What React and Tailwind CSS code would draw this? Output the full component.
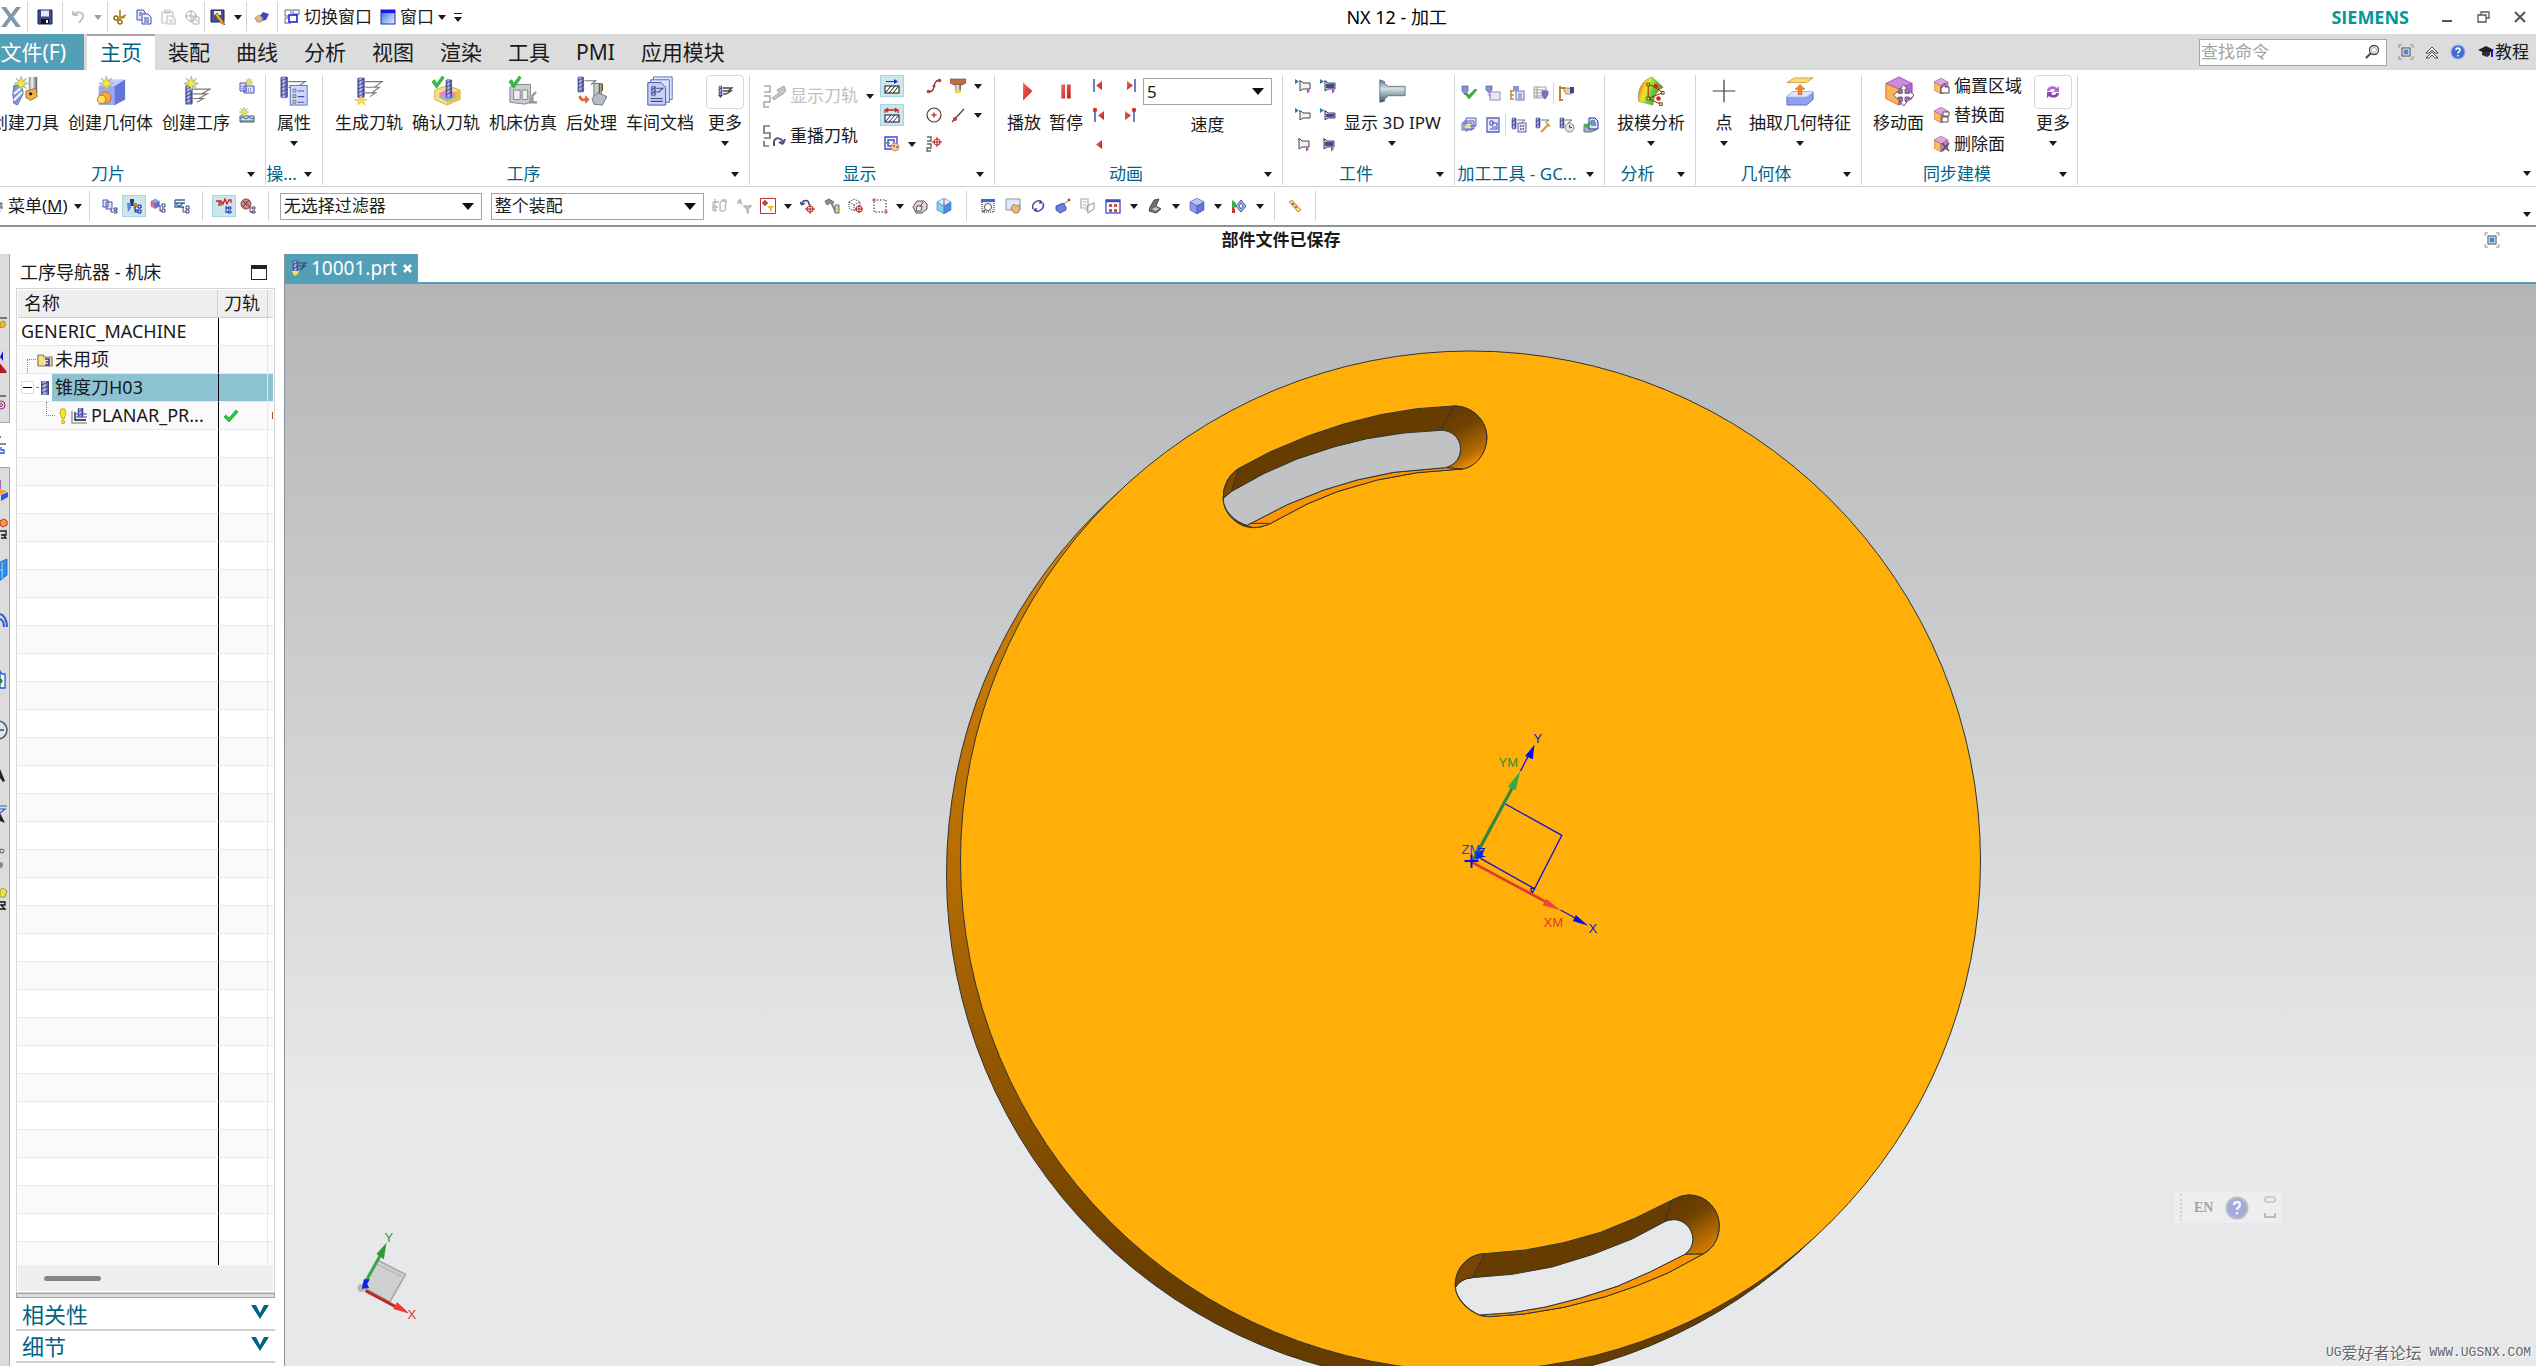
import { useState } from 'react';

/* ── Shared gradients, referenced by id from every icon ── */
function Gradients() {
  return (
    <svg className="absolute h-0 w-0" aria-hidden="true">
      <defs>
        <linearGradient id="steel" x1="0" x2="1" y1="0" y2="0">
          <stop offset="0" stopColor="#4a4f9c" />
          <stop offset=".4" stopColor="#c3c8f5" />
          <stop offset="1" stopColor="#3c3f86" />
        </linearGradient>
        <linearGradient id="grey" x1="0" x2="1" y1="0" y2="0">
          <stop offset="0" stopColor="#8b8b8b" />
          <stop offset=".4" stopColor="#f2f2f2" />
          <stop offset="1" stopColor="#5c5c5c" />
        </linearGradient>
        <linearGradient id="cyl" x1="0" x2="0" y1="0" y2="1">
          <stop offset="0" stopColor="#5d7785" />
          <stop offset=".4" stopColor="#d5e2e8" />
          <stop offset="1" stopColor="#3f5865" />
        </linearGradient>
        <linearGradient id="rainbow" x1="0" x2="1" y1="0" y2=".4">
          <stop offset="0" stopColor="#f0351f" />
          <stop offset=".4" stopColor="#f7e52a" />
          <stop offset=".7" stopColor="#4fd13c" />
          <stop offset="1" stopColor="#e8452a" />
        </linearGradient>
        <linearGradient id="red" x1="0" x2="1" y1="0" y2="1">
          <stop offset="0" stopColor="#f06a60" />
          <stop offset="1" stopColor="#c4181a" />
        </linearGradient>
        <linearGradient id="sky" x1="0" x2="1" y1="0" y2="1">
          <stop offset="0" stopColor="#2d6fd8" />
          <stop offset="1" stopColor="#e8f2ff" />
        </linearGradient>
      </defs>
    </svg>
  );
}

/* ── Icon building blocks ── */
function Spark({ x, y, s = 1 }) {
  return (
    <path
      transform={`translate(${x} ${y}) scale(${s})`}
      d="M0-7 1.5-2.5 5-5 2.5-1.5 7 0 2.5 1.5 5 5 1.5 2.5 0 7-1.5 2.5-5 5-2.5 1.5-7 0-2.5-1.5-5-5-1.5-2.5Z"
      fill="#ffe52e" stroke="#86a7b5" strokeWidth=".7"
    />
  );
}

function Mill({ x, y, w = 7, h = 22 }) {
  const n = Math.floor(h / 4);
  return (
    <g>
      <rect x={x} y={y} width={w} height={h} rx="1" fill="url(#steel)" stroke="#3d4186" strokeWidth=".6" />
      {Array.from({ length: n }, (_, i) => (
        <path key={i} d={`M${x} ${y + 4 + i * 4}l${w}-3`} stroke="#34387c" strokeWidth=".9" />
      ))}
    </g>
  );
}

function Cube({ x, y, s = 1, top = '#b9c1f5', left = '#8e9aee', right = '#6674d8', line = '#4450a8' }) {
  return (
    <g transform={`translate(${x} ${y}) scale(${s})`} stroke={line} strokeWidth=".6" strokeLinejoin="round">
      <path d="M0 4 7 0 14 4 7 8Z" fill={top} />
      <path d="M0 4 7 8V16L0 12Z" fill={left} />
      <path d="M14 4 7 8V16L14 12Z" fill={right} />
    </g>
  );
}

const check = 'M1 6 4 4 6 8 12 0 14 2 6 13Z';

/* Large ribbon icons, drawn on a 32 unit grid */
const BIG = {
  tool: (
    <>
      <rect x="20" y="1" width="9" height="17" fill="url(#grey)" />
      <path d="M17 16 28 13 29 22 22 26 17 23Z" fill="#f2b04c" stroke="#8a5a1a" strokeWidth=".8" />
      <circle cx="22" cy="19" r="1.8" fill="#222" />
      <path d="M4 10H13L14 19 8 31 4 29 3 20Z" fill="#7c97d8" stroke="#4a5aa0" strokeWidth=".8" />
      <path d="M4 19 13 12M4 26 13 17" stroke="#eef2ff" strokeWidth="2.4" />
      <Spark x={12} y={8} s={1.1} />
    </>
  ),
  geometry: (
    <>
      <path d="M3 11 13 4H31V25L20 31H3Z" fill="#7f8ff0" />
      <path d="M3 11H20V31H3Z" fill="#9aa7f5" />
      <path d="M3 11 13 4H31L20 11Z" fill="#c2cbfb" />
      <path d="M20 11V31L31 25V4Z" fill="#6575dc" />
      <circle cx="10" cy="23" r="6" fill="#f7a64a" stroke="#c2701c" />
      <circle cx="6" cy="25" r="4.5" fill="#fbe45c" stroke="#c2701c" />
      <Spark x={11} y={8} s={1.1} />
    </>
  ),
  operation: (
    <>
      <path d="M13 14H31L22 19H13M22 19H28L19 24H13M19 24H24L17 28" fill="none" stroke="#7a7a7a" strokeWidth="1.2" />
      <Mill x={5} y={10} h={20} />
      <Spark x={11} y={8} s={1.1} />
    </>
  ),
  props: (
    <>
      <path d="M10 6H28L22 10M10 12H26" fill="none" stroke="#7a7a7a" strokeWidth="1.2" />
      <Mill x={2} y={1} />
      <rect x="12" y="10" width="18" height="21" fill="#cfd8fa" stroke="#5a66b8" />
      <path d="M15 14h3v3h-3zM15 20h3v3h-3zM15 26h3v3h-3z" fill="#f6f05a" stroke="#4450a8" strokeWidth=".8" />
      <path d="M20 16H27M20 22H27M20 28H27" stroke="#4450a8" strokeWidth="1.2" />
    </>
  ),
  generate: (
    <>
      <path d="M12 6H30L22 12H12M22 12H27L19 18H12M19 18H23L17 22" fill="none" stroke="#7a7a7a" strokeWidth="1.2" />
      <Mill x={4} y={2} h={21} />
      <path d="M8 20 9 25 14 25 10 27 12 31 8 28 4 31 5 27 1 25 6 25Z" fill="#ffe04a" stroke="#d8a31c" strokeWidth=".5" />
    </>
  ),
  verify: (
    <>
      <path d="M4 15 17 10 31 15V25L17 31 4 25Z" fill="#fbe07a" stroke="#c79a2c" strokeWidth=".8" />
      <path d="M17 20V31L31 25V15Z" fill="#f0c244" />
      <path d="M9 18 17 14 26 18V23L17 27 9 23Z" fill="#e68ad0" />
      <path d="M9 21 17 25 26 21V23L17 27 9 23Z" fill="#57cfe0" />
      <Mill x={16} y={4} w={6} h={19} />
      <path d={check} fill="#2fc43a" stroke="#138a1e" strokeWidth=".6" />
    </>
  ),
  machine: (
    <>
      <path d="M2 12 8 9H24V28L18 30 2 28Z" fill="#c9cdd2" stroke="#80858c" />
      <path d="M6 15H13V25H6ZM15 15H21V25H15Z" fill="#eceef0" stroke="#80858c" />
      <path d="M22 28H31M26 27V21L30 17" fill="none" stroke="#8f949a" strokeWidth="2.4" />
      <path d="M26 21 22 24" stroke="#a9adb2" strokeWidth="2" />
      <path d={check} fill="#2fc43a" stroke="#138a1e" strokeWidth=".6" />
    </>
  ),
  post: (
    <>
      <path d="M8 5H20L15 9" fill="none" stroke="#7a7a7a" strokeWidth="1.2" />
      <Mill x={1} y={1} w={6} h={16} />
      <path d="M18 8H26V24H18Z" fill="#c5cacf" stroke="#6d7278" />
      <path d="M24 8V18M27 8V16" stroke="#7d5a30" strokeWidth="1.6" />
      <path d="M16 24 22 18 32 22 27 31 18 30Z" fill="#b8bdc3" stroke="#6d7278" />
      <path d="M2 22C3 27 6 27 9 26V29L13 25 9 21V24C6 25 5 24 4 21Z" fill="#f0662a" stroke="#b83e10" strokeWidth=".5" />
    </>
  ),
  docs: (
    <>
      <path d="M9 1H29V25H9Z" fill="#e4e9fd" stroke="#5a66b8" />
      <path d="M6 4H26V28H6Z" fill="#dbe2fc" stroke="#5a66b8" />
      <path d="M3 7H17L22 12V31H3Z" fill="#c6d0f9" stroke="#4450a8" />
      <Mill x={7} y={11} w={4} h={10} />
      <path d="M12 13H19L15 17H12M6 24H19M6 27H19" fill="none" stroke="#4a4f70" strokeWidth="1.2" />
    </>
  ),
  play: <path d="M15 7 25 16 15 26Z" fill="url(#red)" />,
  pause: <path d="M11 9H15V24H11ZM17 9H21V24H17Z" fill="url(#red)" />,
  ipw: (
    <path d="M3 4 8 6V8L12 11H30V21H12L8 25V27L3 28Z" fill="url(#cyl)" stroke="#51636c" strokeWidth=".8" />
  ),
  draft: (
    <>
      <path d="M3 27C1 15 6 5 17 1L29 12C22 16 19 22 18 31Z" fill="url(#rainbow)" stroke="#5a8a3c" strokeWidth=".6" />
      <path d="M13 9 21 12 28 18M13 9V24L28 18M13 24 26 30" fill="none" stroke="#a81818" />
      <circle cx="21" cy="11" r="2.4" fill="#d81e1e" /><circle cx="24" cy="24" r="2.4" fill="#d81e1e" />
      <path d="M11.500 7.500h3v3h-3zM11.500 22.500h3v3h-3zM27 16.500h3v3h-3zM25 28.500h3v3h-3z" fill="#fbf35a" stroke="#222" strokeWidth=".8" />
    </>
  ),
  point: <path d="M16 4V28M4 16H28" stroke="#3c3c3c" strokeWidth="1.300" />,
  extract: (
    <>
      <path d="M2 7 10 2H30L23 7Z" fill="#fbdf6a" stroke="#c08a2a" strokeWidth=".8" />
      <path d="M2 22 8 17H30V25L23 31H2Z" fill="#8ea0ee" stroke="#4a5ab8" strokeWidth=".8" />
      <path d="M2 22 8 17H30L23 22Z" fill="#dfe6ff" />
      <path d="M14 20V14H11L16 9 21 14H18V20Z" fill="#f58a2a" stroke="#b8500e" strokeWidth=".6" />
    </>
  ),
  moveFace: (
    <>
      <path d="M2 8 16 1 30 8 16 14Z" fill="#c98be0" stroke="#8a3aa8" strokeWidth=".8" />
      <path d="M2 8 16 14V31L2 24Z" fill="#f8b45a" stroke="#d86a2a" strokeWidth="1" />
      <path d="M30 8 16 14V31L30 24Z" fill="#b26ad0" stroke="#8a3aa8" strokeWidth=".8" />
      <path d="M21 9 25 14H22.500V18.500H27V16L32 20.500 27 25V22.500H22.500V27H25L21 32 17 27H19.500V22.500H15V25L10 20.500 15 16V18.500H19.500V14H17Z" fill="#fff" stroke="#555" />
    </>
  ),
};

/* Small icons on a 16 unit grid */
const SMALL = {
  save: (
    <>
      <path d="M1 1H15V15H1Z" fill="#3a4a8c" stroke="#1c2550" />
      <rect x="4" y="1.500" width="8" height="6" fill="#dfe8fb" />
      <rect x="4" y="10" width="8" height="5" fill="#111" /><rect x="9" y="11" width="2" height="3" fill="#fff" />
    </>
  ),
  undo: <path d="M3 6C8 1 14 4 13 8C12 11 10 12 9 14M3 6V2M3 6H8" fill="none" stroke="#c4c4c4" strokeWidth="2" />,
  cut: (
    <>
      <path d="M8 1V9L14 6M8 9 13 8" stroke="#b88a1e" strokeWidth="1.800" fill="none" />
      <circle cx="4" cy="9" r="2" fill="none" stroke="#8f6c14" strokeWidth="1.500" />
      <circle cx="8" cy="13" r="2" fill="none" stroke="#8f6c14" strokeWidth="1.500" />
    </>
  ),
  copy: (
    <>
      <path d="M1 1H7L9 3V11H1Z" fill="#dfe5fb" stroke="#4450a8" />
      <path d="M6 5H12L15 8V15H6Z" fill="#eef1fe" stroke="#4450a8" />
      <path d="M8 9H13M8 11H13M8 13H13M3 4H6M3 6H5" stroke="#4450a8" />
    </>
  ),
  paste: <path d="M2 3H13V8M2 3V14H6M5 1H10V4H5ZM7 7H12L15 10V15H7ZM9 11H13M9 13H13" fill="none" stroke="#c2c2c2" strokeWidth="1.200" />,
  target: <path d="M7 1V14M1 7H13M2 7A5 5 0 0 1 12 7A5 5 0 0 1 7 12A5 5 0 0 1 2 7M9 8H15V15H9ZM11 10 14 13" fill="none" stroke="#b0b0b0" />,
  savePen: (
    <>
      <path d="M1 1H14V13H1Z" fill="#46558f" stroke="#1c2550" />
      <rect x="4" y="2" width="7" height="4" fill="#e6edfb" />
      <path d="M7 4 13 12 15 16 11 14 5 6Z" fill="#f5b52a" stroke="#a8401c" strokeWidth=".8" />
    </>
  ),
  eraser: <><path d="M5 8 9 3 15 5 12 11 7 12Z" fill="#3a4ac0" /><path d="M1 9 5 6 9 9 7 13 3 13Z" fill="#e6b98a" stroke="#8f6a4a" strokeWidth=".6" /></>,
  switchWin: (
    <>
      <path d="M1 1H7V5M1 1V7H4M9 1H15V5H9ZM1 9H4M1 9V14H7" fill="none" stroke="#8a95a5" strokeWidth="1.300" />
      <rect x="5" y="6" width="8" height="7" fill="#fff" stroke="#1414d8" strokeWidth="1.500" />
    </>
  ),
  window: <><rect x="1" y="1" width="14" height="14" fill="url(#sky)" stroke="#1c2ea8" /><path d="M1 2.500H15" stroke="#1414f0" strokeWidth="3" /></>,
  full: (
    <>
      <path d="M1 4V1H4M12 1H15V4M15 12V15H12M4 15H1V12" fill="none" stroke="#8a8a8a" />
      <rect x="4" y="4" width="8" height="8" fill="#fff" stroke="#444" /><rect x="5.500" y="5.500" width="5" height="5" fill="#4a86d8" />
    </>
  ),
  up: <path d="M2 9 8 3 14 9H11L8 6 5 9ZM2 14 8 8 14 14H11L8 11 5 14Z" fill="#fff" stroke="#333" strokeWidth=".9" />,
  help: (
    <>
      <circle cx="8" cy="8" r="7" fill="#3f6fd0" stroke="#9ab4e6" />
      <path d="M6 6C6 3.500 10 3.500 10 6C10 7.500 8 7.500 8 9.500M8 11V12.500" fill="none" stroke="#fff" strokeWidth="1.600" />
    </>
  ),
  hat: <><path d="M0 6 8 2 16 6 9 10Z" fill="#222" /><path d="M4 8V11L9 13 12 11V8" fill="#333" /><path d="M14 6V13" stroke="#1414f0" strokeWidth="2" /></>,
  search: <><circle cx="10" cy="6" r="4.500" fill="none" stroke="#444" strokeWidth="1.300" /><circle cx="10" cy="6" r="2.500" fill="none" stroke="#999" strokeWidth=".8" /><path d="M7 9 2 14" stroke="#444" strokeWidth="2" /></>,
  newProg: <><path d="M1 5H7V13H1ZM5 8H15V15H5Z" fill="#dde2fb" stroke="#4a55a8" /><path d="M3 8V11M7 11H13M7 13H13" stroke="#4a55a8" strokeDasharray="1 1" /><Spark x={10} y={4} s={.6} /></>,
  newMethod: <><path d="M1 9H15V15H1Z" fill="#cfe0ea" stroke="#3f6580" /><path d="M1 12 4 10 7 12 10 10 13 12 15 11M1 14H15" fill="none" stroke="#3f6580" /><Spark x={5} y={5} s={.7} /></>,
  moreOp: <><path d="M6 4H15L11 7H6M10 7H14L9 10H6" fill="none" stroke="#444" strokeWidth="1.300" /><Mill x={2} y={2} w={3} h={9} /><path d="M1 11H6L3.500 14Z" fill="#3a3f8c" /></>,
  hatch1: <><path d="M2 3H10V1L14 3.500 10 6V4H2Z" fill="#1a2ee0" /><rect x="1" y="8" width="14" height="7" fill="#fff" stroke="#111" /><path d="M2 14 7 8M5 15 11 8M9 15 14 9" stroke="#111" /></>,
  hatch2: <><path d="M1 6V3H14V6M4 1 2 3 4 5M11 1 13 3 11 5" fill="none" stroke="#d81e1e" strokeWidth="1.300" /><rect x="1" y="8" width="14" height="7" fill="#fff" stroke="#111" /><path d="M2 14 7 8M5 15 11 8M9 15 14 9" stroke="#1c2478" /></>,
  palette: <><path d="M1 1H13V13H1ZM4 4H10V10H4Z" fill="#fff" stroke="#4444d0" strokeWidth="1.400" /><path d="M1 7H6" stroke="#2fb43a" strokeWidth="1.500" /><circle cx="11" cy="11" r="4" fill="#f3cfa0" stroke="#9a6a3a" strokeWidth=".6" /><circle cx="10" cy="10" r="1" fill="#d82e2e" /><circle cx="13" cy="11" r="1" fill="#3a6ae0" /></>,
  curve: <><path d="M2 14C12 14 4 3 14 2" fill="none" stroke="#444" strokeWidth="1.300" /><circle cx="2.500" cy="13.500" r="1.800" fill="#d83030" /><circle cx="8" cy="8" r="1.600" fill="#d83030" /><circle cx="13.500" cy="2.500" r="1.800" fill="#d83030" /></>,
  circle: <><circle cx="8" cy="8" r="7" fill="none" stroke="#444" strokeWidth="1.200" /><path d="M8 5.500V10.500M5.500 8H10.500" stroke="#d83030" strokeWidth="1.500" /></>,
  stepTarget: <><path d="M1 1H5V5H1M1 8H5V12H1V15H5" fill="none" stroke="#666" strokeWidth="1.400" /><circle cx="11" cy="6" r="3" fill="none" stroke="#d83030" strokeWidth="1.200" /><path d="M11 1V11M6 6H16" stroke="#a82020" /></>,
  holder: <><path d="M0 1H16V5L12 7H4L0 5Z" fill="#b8704a" stroke="#7a4020" strokeWidth=".6" /><rect x="5" y="7" width="6" height="6" fill="url(#grey)" /><rect x="5" y="12" width="6" height="3" fill="#f0d43a" /></>,
  line: <><path d="M2 15 14 2" stroke="#444" strokeWidth="1.200" /><circle cx="5" cy="12" r="2" fill="#d83030" /></>,
  toStart: <><path d="M3 1V14" stroke="#4450a8" strokeWidth="1.500" /><path d="M11 3 5 7.500 11 12Z" fill="url(#red)" /></>,
  toEnd: <><path d="M13 1V14" stroke="#4450a8" strokeWidth="1.500" /><path d="M5 3 11 7.500 5 12Z" fill="url(#red)" /></>,
  prev: <><path d="M4 1V15" stroke="#4450a8" strokeWidth="1.500" /><circle cx="4" cy="3" r="2.200" fill="#d83030" /><path d="M13 4 7 8.500 13 13Z" fill="url(#red)" /></>,
  next: <><path d="M12 1V15" stroke="#4450a8" strokeWidth="1.500" /><circle cx="12" cy="3" r="2.200" fill="#d83030" /><path d="M3 4 9 8.500 3 13Z" fill="url(#red)" /></>,
  back: <path d="M11 4 5 8.500 11 13Z" fill="url(#red)" />,
  ipwA: <><path d="M0 1 4 3.500 0 6Z" fill="#2a7fb0" /><path d="M4 3H6L8 5H15V11H8L5 13V3" fill="#f2f2f2" stroke="#444" /><path d="M12 11 15 13 12 15.500Z" fill="#c03ac0" /></>,
  ipwB: <><path d="M0 1 4 3.500 0 6Z" fill="#2a7fb0" /><path d="M4 3H6L8 5H15V11H8L5 13V3" fill="#c5c9ee" stroke="#444" /><path d="M6 6H14V10H6Z" fill="#4048a0" /><path d="M12 11 15 13 12 15.500Z" fill="#c03ac0" /></>,
  ipwC: <><path d="M0 1 4 3.500 0 6Z" fill="#2a7fb0" /><path d="M4 4H6L8 6H15V11H8L5 13V4" fill="#f2f2f2" stroke="#444" /></>,
  ipwD: <><path d="M0 1 4 3.500 0 6Z" fill="#2a7fb0" /><path d="M4 4H6L8 6H15V11H8L5 13V4" fill="#c5c9ee" stroke="#444" /><path d="M6 7H14V10H6Z" fill="#4048a0" /></>,
  ipwE: <><path d="M3 3H5L7 5H14V11H7L4 13V3" fill="#f2f2f2" stroke="#444" /><path d="M11 11 14 13 11 15.500Z" fill="#c03ac0" /></>,
  ipwF: <><path d="M3 3H5L7 5H14V11H7L4 13V3" fill="#c5c9ee" stroke="#444" /><path d="M5 6H13V10H5Z" fill="#4048a0" /><path d="M11 11 14 13 11 15.500Z" fill="#c03ac0" /></>,
  gcCheck: <><path d="M1 1H7V6L4 10 1 6Z" fill="#8a94c8" stroke="#555e98" strokeWidth=".7" /><path d="M4 9 8 14 16 5 14 4 8 10 6 8Z" fill="#35b53f" stroke="#1c8a28" strokeWidth=".5" /></>,
  gcDoc: <><rect x="5" y="7" width="10" height="8" fill="#e6e8f2" stroke="#8a90b8" /><path d="M1 1H7V5L4 8 1 5Z" fill="#8a94c8" stroke="#555e98" strokeWidth=".7" /><path d="M2 9H6V13Z" fill="#c88ad8" /></>,
  gcTree: <><rect x="7" y="6" width="8" height="9" fill="#dfe4fa" stroke="#6a74b8" /><path d="M9 9H13M9 11H13M9 13H13" stroke="#6a74b8" /><path d="M4 1H10V5L7 7 4 5Z" fill="#8a94c8" /><path d="M2 5V14M1 6H5M1 10H5M1 14H5" stroke="#b8902c" strokeWidth="1.500" /></>,
  gcTable: <><path d="M1 2H13V13H1ZM1 5H13M1 8H13M1 11H13M4 2V13" fill="#f6f6ee" stroke="#8a8f9a" strokeWidth=".8" /><path d="M9 6H15V10L12 14 9 10Z" fill="#8a6ac8" stroke="#555e98" strokeWidth=".7" /></>,
  gcHand: <><path d="M2 1V15M1 15H5M2 3H7" stroke="#b8862a" strokeWidth="2" /><path d="M6 3H11L14 5V9H8L6 6Z" fill="#f0cda6" stroke="#8a6238" strokeWidth=".7" /><rect x="12" y="2" width="4" height="6" fill="#35439a" /></>,
  gcCards: <><path d="M5 1H15V9H5ZM3 4H13V12H3ZM1 6H11V13H1Z" fill="#dfe4fa" stroke="#5a64b0" /><circle cx="7" cy="9" r="2" fill="#f6ec5a" /><path d="M5 15 7 12" stroke="#5a64b0" /></>,
  gcPage: <><path d="M2 1H14V15H2Z" fill="#e3e8fd" stroke="#5a64b0" strokeWidth="1.300" /><path d="M5 4H8V8H5ZM7 6H12V12H5M7 10H11" fill="none" stroke="#4450a8" /></>,
  gcSheet: <><Mill x={1} y={1} w={4} h={11} /><path d="M6 3H14L10 6" fill="none" stroke="#777" /><rect x="7" y="6" width="8" height="9" fill="#dfe4fa" stroke="#5a64b0" /><path d="M9 9H13M9 12H13" stroke="#4450a8" strokeDasharray="1.500 1" strokeWidth="1.500" /></>,
  gcWrench: <><Mill x={1} y={1} w={4} h={10} /><path d="M6 3H14L10 6" fill="none" stroke="#777" /><path d="M6 15 13 8 15 9M13 8 12 6" fill="none" stroke="#dca02a" strokeWidth="2.200" /></>,
  gcClock: <><Mill x={1} y={1} w={4} h={10} /><path d="M6 3H13L9 6" fill="none" stroke="#777" /><circle cx="10.500" cy="10.500" r="4.500" fill="#d8e4ee" stroke="#7a8a98" /><path d="M10.500 8V10.500H13" fill="none" stroke="#44525e" /></>,
  gcPost: <><path d="M1 9 6 6H13V13L8 15H1Z" fill="#aab0b6" stroke="#6d7278" /><path d="M6 1H12L15 4V12H6Z" fill="#dfe8fb" stroke="#1c2ea8" /><path d="M8 4H12M8 6H13M8 8H13" stroke="#1c2ea8" /><path d="M1 7 4 10 9 4" fill="none" stroke="#35b53f" strokeWidth="2" /></>,
  offset: <><Cube x={0} y={0} top="#dca6ec" left="#f8c05a" right="#c77ada" line="#b0586a" /><path d="M7 15V9H9V6H11V9H15V15Z" fill="#fff" stroke="#444" /></>,
  replace: <><Cube x={0} y={0} top="#dca6ec" left="#f8c05a" right="#c77ada" line="#b0586a" /><path d="M9 5H15V9H9ZM8 10H14V15H8Z" fill="#fff" stroke="#555" /></>,
  remove: <><Cube x={0} y={0} top="#dca6ec" left="#f8c05a" right="#c77ada" line="#b0586a" /><path d="M8 7 15 15M15 7 8 15" stroke="#555" strokeWidth="1.600" /></>,
  cycle: <><path d="M2 7C2 2 9 1 12 4L14 2V8H8L10 6C8 4 5 5 5 7Z" fill="#b56ad8" /><path d="M14 9C14 14 7 15 4 12L2 14V8H8L6 10C8 12 11 11 11 9Z" fill="#8a45b0" /></>,
  treeProg: <><path d="M1 2H6V9H1ZM4 4H10V11H4Z" fill="#dfe4fa" stroke="#4a55a8" /><path d="M9 11V14H12M12 10H15V12H12ZM12 13H15V15H12" fill="none" stroke="#35408c" /></>,
  treeTool: <><rect x="4" y="1" width="4" height="7" fill="#2a3a78" /><path d="M7 5H11V9L8 11Z" fill="#b8803a" /><path d="M1 5H5L5 10 2 14Z" fill="#5a86d8" /><path d="M9 9V14H12M9 12H12M12 7H15V10H12ZM12 12H15V15H12Z" fill="none" stroke="#1414a0" /></>,
  treeGeom: <><Cube x={1} y={1} s={.6} top="#8aa0ee" left="#e86a6a" right="#5a6ad8" /><path d="M10 7V13H12M12 6H15V9H12ZM12 11H15V14H12Z" fill="none" stroke="#35408c" /></>,
  treeMethod: <><path d="M1 2H11M1 5H11M1 2V9H10M3 5V7L6 8 9 5" fill="none" stroke="#3a6a9c" strokeWidth="1.300" /><path d="M9 9V14H12M12 8H15V11H12ZM12 12H15V15H12Z" fill="none" stroke="#35408c" /></>,
  wave: <><path d="M0 3H3V8M3 3H5V8M5 3 7 6 9 1 11 6 13 2H15V5" fill="none" stroke="#c81e1e" strokeWidth="1.300" /><path d="M10 8V15M10 10H13M10 14H13M12 9H15V11H12ZM12 13H15V15H12Z" fill="none" stroke="#1c2ea8" /></>,
  redGear: <><circle cx="6" cy="6" r="5" fill="#c88a8a" stroke="#a83a3a" /><path d="M3 3 10 9M9 2 3 9" stroke="#7a2a2a" /><path d="M10 8V14H13M12 9H15V11H12ZM12 13H15V15H12Z" fill="none" stroke="#4a3a5c" /></>,
  gear: <><circle cx="8" cy="8" r="5" fill="none" stroke="#7f8790" strokeWidth="4" strokeDasharray="2.600 1.300" /><circle cx="8" cy="8" r="4" fill="none" stroke="#7f8790" strokeWidth="1.500" /></>,
  ghostTree: <path d="M3 1V14M1 4H7M1 9H6M1 4V12H5M8 6A3 3 0 1 1 13 8A3 3 0 1 1 8 12ZM10 2H14V5" fill="none" stroke="#b8b8b8" strokeWidth="1.300" />,
  ghostFilter: <path d="M2 2 6 6M1 5 5 4 4 1M8 8H15L12 11V15L11 14V11Z" fill="#c8c8c8" stroke="#b8b8b8" strokeWidth="1.500" />,
  filter: <><path d="M.5.5H15.500V15.500H.5Z" fill="#fff" stroke="#c83030" /><path d="M5 2V8M2 5H8" stroke="#333" /><circle cx="5" cy="5" r="2" fill="none" stroke="#c83030" /><path d="M7 8H14L11.500 11V14L10 13V11Z" fill="#f0b42a" /></>,
  snapBack: <><path d="M2 7C2 1 9 1 9 7M2 7 0 4M2 7 5 5" fill="none" stroke="#3a4a78" strokeWidth="1.500" /><circle cx="10" cy="11" r="3" fill="none" stroke="#c83030" strokeWidth="1.200" /><path d="M10 6V16M5 11H15" stroke="#a82020" /></>,
  hammer: <><path d="M1 3 5 1 10 4 8 7 6 5 3 7Z" fill="#8a8f94" stroke="#4a4f54" strokeWidth=".7" /><path d="M8 6 12 15" stroke="#888" strokeWidth="2" /><path d="M11 7H15V15H11Z" fill="#f0d45a" stroke="#5a64b0" /></>,
  dotCube: <><path d="M1 4 6 1 12 4V10L6 13 1 10ZM1 4 6 7 12 4M6 7V13" fill="none" stroke="#333" strokeDasharray="1 1" /><circle cx="11" cy="11" r="3" fill="#fff" stroke="#c83030" strokeWidth="1.200" /><path d="M11 7V15M7 11H15" stroke="#a82020" /></>,
  marquee: <><rect x="2" y="2" width="12" height="12" fill="none" stroke="#222" strokeDasharray="1.500 1.500" /><path d="M.5.5h3v3h-3zM12.500 12.500h3v3h-3z" fill="#d86a6a" /></>,
  faceBox: <><path d="M1 9 5 3H12L15 6V11L10 15H4Z" fill="#d5d8dc" stroke="#555" /><path d="M5 8H10L9 13H4Z" fill="#f2f2f2" stroke="#555" /><path d="M11 4 8 9" stroke="#c83030" /></>,
  glassCube: <><Cube x={1} y={0} top="#e0f0fc" left="#8ccaf0" right="#4f8ae0" line="#3f78c0" /><path d="M8 8V1" stroke="#c03a5a" /></>,
  fit: <><rect x="2" y="3" width="12" height="11" fill="#e8eefc" stroke="#222" strokeDasharray="1 1" /><path d="M1 1H15V4H1Z" fill="#3a6ad8" /><circle cx="8" cy="9" r="3.500" fill="#fff" stroke="#555" /><path d="M5 12 3 14" stroke="#555" strokeWidth="1.500" /></>,
  pan: <><path d="M1 1H15V12H1Z" fill="#dfe9fb" stroke="#8a95a5" /><path d="M7 8 9 6 11 8 14 7 15 11 13 15H9L6 11Z" fill="#e8b878" stroke="#8f6a3a" strokeWidth=".7" /></>,
  rotate: <><path d="M3 11A6 6 0 0 1 12 4M13 5A6 6 0 0 1 4 12" fill="none" stroke="#3a4aa0" strokeWidth="1.500" /><path d="M10 2 13 5 9 6ZM6 14 3 11 7 10Z" fill="#3a4aa0" /></>,
  section: <><path d="M1 8 8 5 11 9V12L5 15 1 12Z" fill="#6a80e0" stroke="#35439a" strokeWidth=".8" /><path d="M9 6 14 2" stroke="#777" /><circle cx="14" cy="2" r="1.400" fill="#d83030" /></>,
  ghostPages: <path d="M1 1H8V10H1ZM3 4H6M3 7H6M5 12H9M7 8 14 5V11L8 15Z" fill="none" stroke="#a8a8a8" strokeWidth="1.200" />,
  orient: <><rect x="1" y="2" width="14" height="13" fill="#fff" stroke="#3a4ad0" strokeWidth="1.300" /><path d="M1 3H15" stroke="#3a4ad0" strokeWidth="2.500" /><path d="M4 6h3v3h-3zM9 6h3v3h-3zM4 11h3v3h-3zM9 11h3v3h-3z" fill="#d84a3a" /></>,
  shade: <><path d="M3 9 7 2 12 1 9 8 14 11 9 15 2 13Z" fill="#6a6f74" stroke="#33373a" strokeWidth=".8" /><path d="M5 11 9 9 12 11 8 13Z" fill="#c8ccd0" /></>,
  blueCube: <Cube x={1} y={0} />,
  layers: <><path d="M1 2 5 5V9L1 11Z" fill="#35b53f" /><path d="M1 9 4 11V15H1Z" fill="#d83030" /><path d="M5 8 10 2 15 8 10 14Z" fill="#aab4e8" stroke="#4a55a8" /><path d="M8 8 10 5 12 8 10 11Z" fill="#fff" stroke="#4a55a8" /></>,
  ruler: <><path d="M2 4 5 2 14 12 11 14Z" fill="#f3d77a" stroke="#a8822a" strokeWidth=".8" /><circle cx="6" cy="6" r="1" fill="#3a3ad0" /><circle cx="9" cy="9" r="1" fill="#d83030" /></>,
  millTab: <><Mill x={2} y={1} w={5} h={10} /><path d="M8 3H15L11 6H8M11 6H14L9 10" fill="none" stroke="#35525e" strokeWidth="1.200" /><path d="M1 11H8L7 14 4 16 2 14Z" fill="#f3df5a" /></>,
  folder: <><path d="M1 3H6L7 5H15V14H1Z" fill="#f6e08a" stroke="#8f7a3a" strokeWidth="1.200" /><path d="M8 7H12V13H8M9 10H12" fill="none" stroke="#1c2ef0" strokeWidth="1.500" /></>,
  bang: <><path d="M6 1H10L11 5 9 11H7L5 5Z" fill="#f8e81e" stroke="#a8941c" strokeWidth=".7" /><circle cx="8" cy="14" r="1.700" fill="#f8e81e" stroke="#a8941c" strokeWidth=".7" /></>,
  planar: <><path d="M1 3V15H16" fill="none" stroke="#9a9a9a" strokeWidth="1.500" /><path d="M4 4V12H15" fill="none" stroke="#111" strokeWidth="1.300" /><path d="M5 6H16M5 9H16" stroke="#2a3ae8" /><Mill x={7} y={0} w={5} h={9} /></>,
  green: <path d="M1 9 3 7 6 10 13 2 15 4 6 14Z" fill="#1fd03a" stroke="#129a26" strokeWidth=".7" />,
};

function Icon({ name }) {
  return <svg viewBox="0 0 16 16" className="h-4 w-4 shrink-0" aria-hidden="true">{SMALL[name]}</svg>;
}

function BigIcon({ name }) {
  return <svg viewBox="0 0 32 32" className="h-[30px] w-[30px]" aria-hidden="true">{BIG[name]}</svg>;
}

function Caret({ dim }) {
  return (
    <svg viewBox="0 0 8 5" className="h-[5px] w-2 shrink-0" aria-hidden="true">
      <path d="M0 0H8L4 5Z" fill={dim ? '#a0a0a0' : '#1a1a1a'} />
    </svg>
  );
}

/* ── Toolbar pieces ── */
function Tool({ icon, label, on }) {
  return (
    <button
      type="button"
      aria-label={label}
      className={`flex h-[22px] w-6 shrink-0 items-center justify-center ${on ? 'border border-[#a9d3de] bg-[#cde6ec]' : ''}`}
    >
      <Icon name={icon} />
    </button>
  );
}

function Drop({ label = '更多选项', dim }) {
  return (
    <button type="button" aria-label={label} className="flex h-[22px] w-4 shrink-0 items-center justify-center">
      <Caret dim={dim} />
    </button>
  );
}

const Sep = () => <div className="h-[30px] w-px shrink-0 bg-[#d4d4d4]" />;

function Group({ label, className, children }) {
  return (
    <section className={`flex h-[110px] shrink-0 flex-col border-r border-[#d4d4d4] ${className}`}>
      <div className="flex h-[87px] shrink-0 items-start">{children}</div>
      <div className="flex h-6 shrink-0 items-center">
        <h2 className="flex-1 text-center leading-6 whitespace-nowrap text-[#006487]">{label}</h2>
        <button type="button" aria-label={`${label}选项`} className="mr-[3px] flex w-[22px] justify-center">
          <Caret />
        </button>
      </div>
    </section>
  );
}

function BigButton({ icon, label, drop, wide }) {
  return (
    <button type="button" className={`flex shrink-0 flex-col items-center px-1 ${wide ? 'w-[42px]' : ''}`}>
      <span className="flex h-8 items-center"><BigIcon name={icon} /></span>
      <span className="mt-1 leading-6 whitespace-nowrap">{label}</span>
      {drop && <span className="mt-[6px]"><Caret /></span>}
    </button>
  );
}

function MoreButton({ icon }) {
  return (
    <button type="button" className="flex w-[42px] shrink-0 flex-col items-center">
      <span className="flex h-[34px] w-[38px] items-center justify-center rounded border border-[#d9d9d9]">
        <Icon name={icon} />
      </span>
      <span className="mt-[2px] leading-6">更多</span>
      <span className="mt-[6px]"><Caret /></span>
    </button>
  );
}

function Combo({ label, options, className }) {
  return (
    <div className={`relative h-[27px] shrink-0 ${className}`}>
      <select aria-label={label} className="h-full w-full appearance-none border border-[#a5a5a5] bg-white px-[3px] leading-6 outline-none">
        {options.map((o) => <option key={o}>{o}</option>)}
      </select>
      <svg viewBox="0 0 12 7" className="pointer-events-none absolute top-[10px] right-2 h-[7px] w-3" aria-hidden="true">
        <path d="M0 0H12L6 7Z" fill="#111" />
      </svg>
    </div>
  );
}

/* ── Title bar ── */
function TitleBar() {
  return (
    <header className="flex h-[34px] items-center">
      <svg viewBox="0 0 20 20" className="ml-px h-5 w-5" aria-label="NX">
        <path d="M0 0H5L10 7 15 0H20L12.500 10 20 20H15L10 13 5 20H0L7.500 10Z" fill="#8199ab" />
      </svg>
      <div className="ml-[6px] flex items-center">
        <Sep />
        <div className="flex px-[5px]"><Tool icon="save" label="保存" /></div>
        <Sep />
        <div className="flex pr-px pl-[3px]"><Tool icon="undo" label="撤消" /><Drop dim /></div>
        <Sep />
        <div className="flex">
          <Tool icon="cut" label="剪切" />
          <Tool icon="copy" label="复制" />
          <Tool icon="paste" label="粘贴" />
          <Tool icon="target" label="定位" />
        </div>
        <Sep />
        <div className="flex pl-px"><Tool icon="savePen" label="另存为" /><Drop /></div>
        <Sep />
        <div className="flex px-[3px]"><Tool icon="eraser" label="擦除" /></div>
        <Sep />
      </div>
      <button type="button" className="ml-[6px] flex items-center gap-1"><Icon name="switchWin" />切换窗口</button>
      <button type="button" className="ml-2 flex items-center gap-1"><Icon name="window" />窗口<Caret /></button>
      <button type="button" aria-label="自定义" className="ml-2 flex flex-col items-center gap-[3px]">
        <span className="h-px w-2 bg-[#1a1a1a]" />
        <Caret />
      </button>
      <h1 className="flex-1 text-center text-[18px] text-black">NX 12 - 加工</h1>
      <span className="font-['Open_Sans',sans-serif] text-[18px] font-bold text-[#009999]">SIEMENS</span>
      <div className="flex items-center gap-6 pr-[10px] pl-8 text-[#555]">
        <button type="button" aria-label="最小化">
          <svg viewBox="0 0 12 12" className="h-3 w-3"><path d="M1 10H11" stroke="currentColor" strokeWidth="2" /></svg>
        </button>
        <button type="button" aria-label="还原">
          <svg viewBox="0 0 13 12" className="h-3 w-[13px]"><path d="M4 4V1H12V7H9M1 4H9V11H1Z" fill="none" stroke="currentColor" strokeWidth="1.300" /></svg>
        </button>
        <button type="button" aria-label="关闭">
          <svg viewBox="0 0 12 12" className="h-3 w-3"><path d="M1 1 11 11M11 1 1 11" stroke="currentColor" strokeWidth="2" /></svg>
        </button>
      </div>
    </header>
  );
}

const TABS = ['主页', '装配', '曲线', '分析', '视图', '渲染', '工具', 'PMI', '应用模块'];

function TabBar() {
  const [active, setActive] = useState('主页');
  return (
    <nav className="flex h-9 items-stretch bg-[#dcdcdc] text-[21px]">
      <button type="button" className="flex w-[84px] items-center justify-end bg-[#549fb8] pr-[18px] leading-8 whitespace-nowrap text-white">文件(F)</button>
      <div className="ml-[3px] flex">
        {TABS.map((t) => (
          <button
            key={t}
            type="button"
            onClick={() => setActive(t)}
            className={`border-t-2 px-[13px] ${t === active ? 'border-[#a3a3a3] bg-white text-[#006487]' : 'border-transparent'}`}
          >
            {t}
          </button>
        ))}
      </div>
      <div className="ml-auto flex items-center pr-[7px] text-[17px]">
        <label className="flex h-[27px] w-[188px] items-center border border-[#a5a5a5] bg-white pr-[6px]">
          <input type="text" aria-label="查找命令" placeholder="查找命令" className="w-full min-w-0 bg-transparent pl-px outline-none placeholder:text-[#a3a3a3]" />
          <Icon name="search" />
        </label>
        <div className="ml-[7px] flex gap-[2px]">
          <Tool icon="full" label="全屏" />
          <Tool icon="up" label="最小化功能区" />
          <Tool icon="help" label="帮助" />
        </div>
        <button type="button" className="ml-2 flex items-center gap-px"><Icon name="hat" />教程</button>
      </div>
    </nav>
  );
}

/* ── Ribbon ── */
function Ribbon() {
  return (
    <div className="flex h-[117px] border-b border-[#d4d4d4] pt-[5px]">
      <Group label="刀片" className="-ml-6 w-[290px]">
        <div className="flex gap-px pl-[11px]">
          <BigButton icon="tool" label="创建刀具" />
          <BigButton icon="geometry" label="创建几何体" />
          <BigButton icon="operation" label="创建工序" />
        </div>
        <div className="flex flex-col gap-[7px] pl-px">
          <Tool icon="newProg" label="创建程序" />
          <Tool icon="newMethod" label="创建方法" />
        </div>
      </Group>

      <Group label="操..." className="w-[57px]">
        <div className="flex w-full justify-center"><BigButton icon="props" label="属性" drop /></div>
      </Group>

      <Group label="工序" className="w-[427px]">
        <div className="flex gap-px pl-2">
          <BigButton icon="generate" label="生成刀轨" />
          <BigButton icon="verify" label="确认刀轨" />
          <BigButton icon="machine" label="机床仿真" />
          <BigButton icon="post" label="后处理" />
          <BigButton icon="docs" label="车间文档" />
        </div>
        <div className="ml-[6px] flex"><MoreButton icon="moreOp" /></div>
      </Group>

      <Group label="显示" className="w-[245px]">
        <div className="flex flex-col gap-4 pt-[9px] pl-3">
          <div className="flex h-6 items-center">
            <button type="button" disabled className="flex items-center gap-1 whitespace-nowrap text-[#c0c0c0]">
              <svg viewBox="0 0 24 24" className="h-6 w-6">
                <path d="M2 2H8V8H2M2 12H8V18H2V23H7" fill="none" stroke="#a8a8a8" strokeWidth="1.500" />
                <path d="M10 14 17 9 15 6 22 2 24 7 20 11 19 11 12 16Z" fill="#c4c4c4" stroke="#9a9a9a" strokeWidth=".8" />
              </svg>
              显示刀轨
            </button>
            <div className="pl-1"><Drop /></div>
          </div>
          <button type="button" className="flex h-6 items-center gap-1 whitespace-nowrap">
            <svg viewBox="0 0 24 24" className="h-6 w-6">
              <path d="M8 2H2V9H8V14H2M2 17V22H7" fill="none" stroke="#777" strokeWidth="1.700" />
              <path d="M12 22V18C12 13 20 13 21 19M21 20 17 18M21 20 23 15" fill="none" stroke="#4a4f80" strokeWidth="2" />
            </svg>
            重播刀轨
          </button>
        </div>
        <div className="ml-[2px] flex flex-col gap-[7px]">
          <Tool icon="hatch1" label="工件移动" on />
          <Tool icon="hatch2" label="工件范围" on />
          <div className="flex"><Tool icon="palette" label="颜色" /><Drop /></div>
        </div>
        <div className="flex flex-col gap-[7px] pl-[2px]">
          <div className="flex"><Tool icon="curve" label="曲线" /><Tool icon="holder" label="刀柄" /><Drop /></div>
          <div className="flex"><Tool icon="circle" label="中心" /><Tool icon="line" label="直线" /><Drop /></div>
          <Tool icon="stepTarget" label="步进" />
        </div>
      </Group>

      <Group label="动画" className="w-[288px]">
        <div className="flex pl-2">
          <BigButton icon="play" label="播放" wide />
          <BigButton icon="pause" label="暂停" wide />
        </div>
        <div className="grid grid-cols-2 gap-x-[7px] gap-y-[7px]">
          <Tool icon="toStart" label="到开始" />
          <Tool icon="toEnd" label="到结尾" />
          <Tool icon="prev" label="上一个" />
          <Tool icon="next" label="下一个" />
          <Tool icon="back" label="后退" />
        </div>
        <div className="ml-px flex flex-col items-center pt-[3px]">
          <Combo label="速度" options={['5', '6', '7', '8', '9', '10']} className="w-[129px]" />
          <span className="mt-2 leading-6">速度</span>
        </div>
      </Group>

      <Group label="工件" className="w-[172px]">
        <div className="grid grid-cols-2 gap-x-px gap-y-[7px] pl-2">
          <Tool icon="ipwA" label="工件 1" />
          <Tool icon="ipwB" label="工件 2" />
          <Tool icon="ipwC" label="工件 3" />
          <Tool icon="ipwD" label="工件 4" />
          <Tool icon="ipwE" label="工件 5" />
          <Tool icon="ipwF" label="工件 6" />
        </div>
        <BigButton icon="ipw" label="显示 3D IPW" drop />
      </Group>

      <Group label="加工工具 - GC..." className="w-[150px]">
        <div className="flex flex-col gap-[10px] pt-[7px] pl-[2px]">
          <div className="flex">
            <Tool icon="gcCheck" label="检查" />
            <Tool icon="gcDoc" label="文档" />
            <Tool icon="gcTree" label="结构" />
            <Tool icon="gcTable" label="表格" />
            <div className="w-px bg-[#d4d4d4]" />
            <Tool icon="gcHand" label="拾取" />
          </div>
          <div className="flex">
            <Tool icon="gcCards" label="卡片" />
            <Tool icon="gcPage" label="页面" />
            <div className="mr-px w-px bg-[#d4d4d4]" />
            <Tool icon="gcSheet" label="工序单" />
            <Tool icon="gcWrench" label="工具" />
            <Tool icon="gcClock" label="时间" />
            <Tool icon="gcPost" label="后处理" />
          </div>
        </div>
      </Group>

      <Group label="分析" className="w-[91px]">
        <div className="flex pl-2"><BigButton icon="draft" label="拔模分析" drop /></div>
      </Group>

      <Group label="几何体" className="w-[166px]">
        <div className="flex pl-[7px]">
          <BigButton icon="point" label="点" drop wide />
          <BigButton icon="extract" label="抽取几何特征" drop />
        </div>
      </Group>

      <Group label="同步建模" className="w-[216px]">
        <div className="flex pl-[7px]"><BigButton icon="moveFace" label="移动面" /></div>
        <div className="ml-[6px] flex flex-col gap-[7px]">
          <button type="button" className="flex h-[22px] items-center gap-1 whitespace-nowrap"><Icon name="offset" />偏置区域</button>
          <button type="button" className="flex h-[22px] items-center gap-1 whitespace-nowrap"><Icon name="replace" />替换面</button>
          <button type="button" className="flex h-[22px] items-center gap-1 whitespace-nowrap"><Icon name="remove" />删除面</button>
        </div>
        <div className="ml-[10px] flex"><MoreButton icon="cycle" /></div>
      </Group>

      <div className="ml-auto flex items-end pr-px pb-[2px]"><Drop label="功能区选项" /></div>
    </div>
  );
}

/* ── Selection bar ── */
function SelectionBar() {
  return (
    <div className="flex h-10 items-center border-b-2 border-[#8e938f]">
      <button type="button" className="-ml-3 flex items-center whitespace-nowrap">
        <Icon name="gear" />
        <span className="ml-1">菜单(<u>M</u>)</span>
        <span className="mr-[7px] ml-[6px]"><Caret /></span>
      </button>
      <Sep />
      <div className="mx-2 flex">
        <Tool icon="treeProg" label="程序顺序视图" />
        <Tool icon="treeTool" label="机床视图" on />
        <Tool icon="treeGeom" label="几何视图" />
        <Tool icon="treeMethod" label="加工方法视图" />
      </div>
      <Sep />
      <div className="ml-[9px] flex pr-2"><Tool icon="wave" label="刀轨显示" on /><Tool icon="redGear" label="选项" /></div>
      <Sep />
      <div className="ml-[11px] flex gap-[9px]">
        <Combo label="类型过滤器" options={['无选择过滤器']} className="w-[202px]" />
        <Combo label="选择范围" options={['整个装配']} className="w-[213px]" />
      </div>
      <div className="mr-[10px] ml-1 flex">
        <Tool icon="ghostTree" label="装配导航" />
        <Tool icon="ghostFilter" label="重置过滤器" />
        <Tool icon="filter" label="过滤器" />
        <Drop />
        <Tool icon="snapBack" label="捕捉" />
        <Tool icon="hammer" label="工具" />
        <Tool icon="dotCube" label="隐藏体" />
        <Tool icon="marquee" label="矩形选择" />
        <Drop />
        <Tool icon="faceBox" label="面" />
        <Tool icon="glassCube" label="体" />
      </div>
      <Sep />
      <div className="mr-[6px] ml-[9px] flex gap-px">
        <Tool icon="fit" label="适合窗口" />
        <Tool icon="pan" label="平移" />
        <Tool icon="rotate" label="旋转" />
        <Tool icon="section" label="截面" />
        <Tool icon="ghostPages" label="页面" />
        <Tool icon="orient" label="定向视图" />
        <Drop />
        <Tool icon="shade" label="着色" />
        <Drop />
        <Tool icon="blueCube" label="渲染样式" />
        <Drop />
        <Tool icon="layers" label="图层" />
        <Drop />
      </div>
      <Sep />
      <div className="mx-2 flex"><Tool icon="ruler" label="测量" /></div>
      <Sep />
      <div className="ml-auto flex self-end pr-px"><Drop label="工具栏选项" /></div>
    </div>
  );
}

/* ── Resource rail: only the right part of each icon shows at the window edge ── */
const RAIL_TOP = [
  { label: '装配导航器', h: 'h-10', art: <><path d="M0 8H7" stroke="#111" /><path d="M0 13 3 11 5 12V16L2 18 0 17Z" fill="#f3c22a" stroke="#9a7410" strokeWidth=".8" /></> },
  { label: '约束导航器', h: 'h-[38px]', art: <><path d="M3 2V12L0 8Z" fill="#1414d8" /><path d="M0 15 6 22V24H0Z" fill="#d01414" stroke="#7a0a0a" strokeWidth=".6" /></> },
  { label: '部件导航器', h: 'h-[42px]', art: <><path d="M0 7H6" stroke="#111" /><circle cx="1" cy="16" r="4" fill="none" stroke="#8a2a7a" /><circle cx="1" cy="16" r="1.500" fill="none" stroke="#8a2a7a" /></> },
];

const RAIL_BOTTOM = [
  { label: '机床导航器', h: 'h-[38px]', art: <><path d="M0 3V12" stroke="#9a6ac0" strokeWidth="2" /><path d="M0 12 7 14 0 18Z" fill="#f3a02a" /><path d="M1 18 8 15V20L1 24Z" fill="#2a5ae0" /></> },
  { label: '机器', h: 'h-[38px]', art: <><path d="M0 6 4 4 7 6V10L3 12 0 10Z" fill="#f0a04a" stroke="#c81e1e" /><path d="M0 16H6V20H1M3 19 6 23H1" fill="none" stroke="#222" strokeWidth="1.300" /></> },
  { label: '重用库', h: 'h-12', art: <><path d="M0 4 7 1V17L1 22H0Z" fill="#2f8fe8" stroke="#1a5ab0" strokeWidth=".7" /><path d="M2 4V21M0 12H3" stroke="#bfe0ff" strokeWidth=".8" /></> },
  { label: 'HD3D 工具', h: 'h-[54px]', art: <path d="M0 5C4 6 7 11 7 18M0 10C3 11 4 14 4 18" fill="none" stroke="#2a5ad0" strokeWidth="2" /> },
  { label: 'Web 浏览器', h: 'h-[58px]', art: <><path d="M0 6 2 9H5V23H0Z" fill="#fff" stroke="#2a5ad0" strokeWidth="1.300" /><circle cx="0" cy="16" r="2.500" fill="#2a8a1e" /></> },
  { label: '历史记录', h: 'h-12', art: <><circle cx="-2" cy="12" r="9" fill="#d5e4f6" stroke="#555" strokeWidth="1.500" /><path d="M-2 12H4" stroke="#222" strokeWidth="1.200" /></> },
  { label: '加工向导', h: 'h-[42px]', art: <path d="M0 6 5 18 3 19 0 15Z" fill="#222" /> },
  { label: '加工模板', h: 'h-10', art: <><path d="M0 2H7M0 5H5L0 9" fill="none" stroke="#2a5ad0" strokeWidth="1.200" /><path d="M0 9 5 19 0 17Z" fill="#222" /></> },
  { label: '角色', h: 'h-[42px]', art: <><circle cx="2" cy="6" r="2" fill="none" stroke="#555" /><circle cx="0" cy="20" r="3" fill="#8a80a0" /></> },
  { label: '系统可视化', h: 'h-10', art: <><path d="M0 4 3 2 7 5 5 11H0Z" fill="#f3df4a" stroke="#8f8a1e" strokeWidth=".8" /><path d="M0 16H5V19H1L5 23H0" fill="none" stroke="#111" strokeWidth="1.300" /></> },
];

function RailButton({ label, h, art }) {
  return (
    <button type="button" aria-label={label} className={`flex w-full items-center ${h}`}>
      <svg viewBox="0 0 8 24" className="h-6 w-2" aria-hidden="true">{art}</svg>
    </button>
  );
}

function Rail() {
  return (
    <nav className="flex w-[10px] shrink-0 flex-col">
      <div className="border-r border-b border-[#a5a5a5] bg-[#dcdcdc] pt-12">
        {RAIL_TOP.map((r) => <RailButton key={r.label} {...r} />)}
      </div>
      <RailButton
        label="工序导航器" h="h-11"
        art={<><path d="M0 4H1M0 20H4V17H1V14" fill="none" stroke="#2a5ad0" strokeWidth="1.300" /><path d="M0 11H6" stroke="#111" /></>}
      />
      <div className="flex-1 border-t border-r border-[#a5a5a5] bg-[#dcdcdc] pt-[2px]">
        {RAIL_BOTTOM.map((r) => <RailButton key={r.label} {...r} />)}
      </div>
    </nav>
  );
}

/* ── Operation navigator ── */
const BLANK_ROWS = Array.from({ length: 60 }, (_, i) => i);

function Row({ children, mark, tail, odd, selected }) {
  const fill = selected ? 'bg-[#8cc2d1]' : '';
  return (
    <tr className={`h-7 ${odd ? 'bg-[#fafafa]' : 'bg-white'}`}>
      <td className="border-b border-[#e8e8e8] p-0 whitespace-nowrap">{children}</td>
      <td className={`border-r border-b border-l border-r-[#e8e8e8] border-b-[#e8e8e8] border-l-black p-0 pl-1 ${fill}`}>{mark}</td>
      <td className={`border-b border-[#e8e8e8] p-0 ${fill}`}>{tail}</td>
    </tr>
  );
}

function Section({ title }) {
  return (
    <button type="button" className="flex h-8 w-full items-center justify-between border-b-2 border-[#d0d0d0] pr-[6px] pl-[6px] text-[22px] leading-[30px] text-[#006487]">
      {title}
      <svg viewBox="0 0 18 14" className="mb-1 h-[14px] w-[18px]" aria-hidden="true">
        <path d="M0 0H5L9 8 13 0H18L9 14Z" fill="#006487" />
      </svg>
    </button>
  );
}

function Navigator() {
  return (
    <aside className="flex w-[274px] shrink-0 flex-col pr-[9px] pl-[6px] text-[18px]">
      <div className="flex h-[34px] shrink-0 items-center justify-between pt-[2px] pr-2 pl-1">
        <h2>工序导航器 - 机床</h2>
        <button type="button" aria-label="最大化" className="h-[15px] w-4 border border-t-4 border-[#222]" />
      </div>
      <div className="flex min-h-0 flex-1 flex-col border border-[#d4d4d4] p-px">
        <div className="min-h-0 flex-1 overflow-hidden">
          <table className="w-full table-fixed border-separate border-spacing-0 leading-[27px]">
            <thead>
              <tr className="h-7 bg-[#efefef] text-left">
                <th className="border-r border-b border-[#cfcfcf] p-0 pl-[6px] font-normal">名称</th>
                <th className="w-[50px] border-r border-b border-[#cfcfcf] p-0 pl-[6px] font-normal">刀轨</th>
                <th className="w-[5px] border-b border-[#cfcfcf] p-0" aria-label="换刀" />
              </tr>
            </thead>
            <tbody>
              <Row><span className="flex h-[27px] items-center pl-[3px]">GENERIC_MACHINE</span></Row>
              <Row odd>
                <span className="ml-[9px] flex h-[27px] items-center">
                  <span className="mt-[13px] h-[14px] w-[9px] border-t border-l border-dotted border-[#888]" />
                  <span className="mr-[2px] ml-px"><Icon name="folder" /></span>
                  未用项
                </span>
              </Row>
              <Row selected>
                <span className="flex h-[27px] items-stretch">
                  <button type="button" aria-label="折叠" className="mr-[2px] ml-[3px] flex h-[13px] w-[13px] items-center justify-center self-center border border-[#ddd] bg-white">
                    <span className="h-px w-[9px] bg-black" />
                  </button>
                  <span className="w-[2px] self-center border-t border-dotted border-[#888]" />
                  <svg viewBox="0 0 8 14" className="mx-[3px] h-[14px] w-2 self-center"><Mill x={0} y={0} w={8} h={14} /></svg>
                  <span className="flex-1 bg-[#8cc2d1] pl-[3px]">锥度刀H03</span>
                </span>
              </Row>
              <Row
                odd
                mark={<span className="flex h-[27px] items-center"><Icon name="green" /></span>}
                tail={<span className="flex h-[27px] items-center justify-end"><span className="h-[7px] w-px bg-[#a8502a]" /></span>}
              >
                <span className="ml-7 flex h-[27px] items-center">
                  <span className="mb-[13px] h-[14px] w-[9px] border-b border-l border-dotted border-[#888]" />
                  <Icon name="bang" />
                  <Icon name="planar" />
                  <span className="ml-1">PLANAR_PR...</span>
                </span>
              </Row>
              {BLANK_ROWS.map((i) => <Row key={i} odd={i % 2 === 1} />)}
            </tbody>
          </table>
        </div>
        <div className="flex h-[26px] shrink-0 items-center bg-[#efefef] pl-[26px]">
          <div className="h-[5px] w-[57px] rounded-full bg-[#868686]" />
        </div>
      </div>
      <div className="h-[5px] shrink-0 border border-[#a5a5a5] bg-[#dcdcdc]" />
      <div className="shrink-0 pt-px pb-[3px]">
        <Section title="相关性" />
        <Section title="细节" />
      </div>
    </aside>
  );
}

/* ── Graphics window ── */
const EDGE = { stroke: '#2f3436', strokeWidth: 1 };

function Part() {
  return (
    <svg viewBox="284 284 2252 1082" preserveAspectRatio="xMidYMid slice" className="block h-full w-full" aria-label="零件模型">
      <defs>
        <linearGradient id="rim" gradientUnits="userSpaceOnUse" x1="0" y1="450" x2="0" y2="1300">
          <stop offset="0" stopColor="#d98606" />
          <stop offset=".5" stopColor="#b56c02" />
          <stop offset="1" stopColor="#663c00" />
        </linearGradient>
        <linearGradient id="end" gradientUnits="userSpaceOnUse" x1="800" y1="230" x2="880" y2="375">
          <stop offset="0" stopColor="#663c00" />
          <stop offset=".3" stopColor="#704200" />
          <stop offset=".8" stopColor="#b86c00" />
          <stop offset="1" stopColor="#f59200" />
        </linearGradient>
        <linearGradient id="end2" gradientUnits="userSpaceOnUse" x1="770" y1="110" x2="850" y2="240">
          <stop offset="0" stopColor="#663c00" />
          <stop offset=".3" stopColor="#704200" />
          <stop offset="1" stopColor="#cf7a00" />
        </linearGradient>
      </defs>

      {/* disc */}
      <circle cx="1456" cy="874" r="510" fill="url(#rim)" {...EDGE} />
      <circle cx="1470" cy="861" r="510" fill="#ffaf08" {...EDGE} />

      {/* upper slot */}
      <g transform="translate(1180 340) scale(.33333)" stroke="#2f3436" strokeWidth="3" strokeLinejoin="round">
        <path d="M175 385 270 335 385 287 490 252 600 224 710 206 820 198C880 198 919 245 919 292 919 335 890 380 845 387L710 398 590 420 470 455 380 492 265 553Q240 563 220 563C170 563 128 520 128 475Q128 415 175 385Z" fill="#663c00" />
        <path d="M820 198C880 198 919 245 919 292 919 335 890 380 845 387L795 383C825 375 840 352 840 327 840 295 815 271 782 271Z" fill="url(#end)" />
        <path d="M845 387 710 398 590 420 470 455 380 492 265 553Q240 563 220 563L197 557 320 494 430 450 530 420 640 397 795 383Z" fill="#fb9600" />
        <path d="M152 455 250 401 350 357 460 321 560 296 670 279 782 271C815 271 840 295 840 327 840 352 825 375 795 383L640 397 530 420 430 450 320 494 200 556C160 545 128 510 128 475Z" fill="#c1c2c4" />
        <path d="M175 385 152 455 128 475Q128 415 175 385Z" fill="#7c4900" />
        <path d="M207 550H265" />
      </g>

      {/* lower slot */}
      <g transform="translate(1420 1170) scale(.33333)" stroke="#2f3436" strokeWidth="3" strokeLinejoin="round">
        <path d="M193 251 315 240 430 218 540 187 645 144 755 90Q780 76 803 75C860 75 896 120 896 168 896 210 875 237 848 252L740 310 650 347 555 380 430 412 310 432 205 440Q180 440 165 430C130 412 104 380 104 345 106 290 145 252 193 251Z" fill="#663c00" />
        <path d="M755 90Q780 76 803 75C860 75 896 120 896 168 896 210 875 237 848 252L793 253Q817 235 817 208C817 175 790 149 760 149Q745 149 733 155Z" fill="url(#end2)" />
        <path d="M848 252 740 310 650 347 555 380 430 412 310 432 205 440 178 435 275 428 375 411 480 384 590 349 690 305 793 253Z" fill="#fb9600" />
        <path d="M155 323 275 313 395 291 515 254 635 207 733 155Q745 149 760 149C790 149 817 175 817 208Q817 235 793 253L690 305 590 349 480 384 375 411 275 428 178 435C140 420 106 382 105 352Q120 326 155 323Z" fill="#e6e8ea" />
        <path d="M193 251 155 323Q120 326 105 352C100 290 150 252 193 251Z" fill="#784600" />
      </g>

      {/* work and machine coordinate systems */}
      <g transform="translate(1420 700) scale(.33333)" fill="none" strokeWidth="4">
        <path d="M255 312 424 406 335 580M180 475 340 565M177 450 255 305M300 213 330 155M420 630 475 660" stroke="#1414d8" />
        <path d="M342 134 337 178 314 168ZM503 677 457 663 466 645Z" fill="#0a0af0" />
        <path d="M248 308 262 295M332 578V565H342" stroke="#1414a0" />
        <path d="M158 480 280 255" stroke="#2f8a3c" strokeWidth="9" />
        <path d="M299 214 286 270 262 260Z" fill="#3aa648" />
        <path d="M155 487 375 605" stroke="#e03a2a" strokeWidth="8" />
        <path d="M420 631 366 616 378 597Z" fill="#f04438" />
        <path d="M132 483H174M153 463V503" stroke="#0a0af0" strokeWidth="6" />
        <path d="M163 455 190 450 186 472 166 480Z" fill="#0a3ac8" />
      </g>
      <g fontFamily="'Liberation Sans', Arial, sans-serif" fontSize="13">
        <text x="1533" y="743" fill="#1414d8">Y</text>
        <text x="1498" y="767" fill="#2f8f2a">YM</text>
        <text x="1588" y="933" fill="#1414d8">X</text>
        <text x="1543" y="927" fill="#e03a2a">XM</text>
        <text x="1461" y="854" fill="#1450c8">ZM</text>
        <text x="1477" y="857" fill="#1414d8">Z</text>
      </g>

      {/* view triad */}
      <g transform="translate(0 1180) scale(.33333)" strokeLinejoin="round">
        <path d="M1130 240 1215 283 1168 366 1090 322Z" fill="#cfd1d1" stroke="#a8aaab" strokeWidth="5" />
        <path d="M1125 250 1205 290" stroke="#b4b6b7" strokeWidth="4" />
        <path d="M1088 318 1140 225" stroke="#3aa648" strokeWidth="9" />
        <path d="M1158 188 1150 238 1128 222Z" fill="#2f9a3c" />
        <path d="M1095 332 1185 380" stroke="#b82a2a" strokeWidth="9" />
        <path d="M1222 398 1180 386 1190 368Z" fill="#ee3a34" stroke="#ee3a34" strokeWidth="3" />
        <circle cx="1083" cy="324" r="12" fill="#b4b6b7" />
        <path d="M1090 298H1108L1100 312 1106 324 1084 326Z" fill="#0a2ae0" />
      </g>
      <g fontFamily="'Liberation Sans', Arial, sans-serif" fontSize="13">
        <text x="384" y="1242" fill="#2f9a3c">Y</text>
        <text x="407" y="1319" fill="#d83a3a">X</text>
      </g>
    </svg>
  );
}

function LanguageBar() {
  return (
    <div className="absolute right-[254px] bottom-[143px] flex h-[31px] w-[108px] items-center bg-[#edeeef] pl-[6px]">
      <span className="h-[27px] border-l-2 border-dotted border-[#cfcfcf]" />
      <span className="ml-3 font-['Liberation_Serif',serif] text-sm font-bold text-[#a3a3a3]">EN</span>
      <svg viewBox="0 0 24 24" className="ml-3 h-6 w-6" aria-hidden="true">
        <circle cx="12" cy="12" r="10.500" fill="#a4a9e0" stroke="#bdbdbd" strokeWidth="2" />
        <path d="M9 9C9 5 15 5 15 9C15 11 12 11 12 14M12 16V18.500" fill="none" stroke="#f2f2fa" strokeWidth="2.500" />
      </svg>
      <svg viewBox="0 0 14 24" className="ml-[14px] h-6 w-[14px]" aria-hidden="true">
        <rect x="2" y="1" width="10" height="5" rx="2" fill="none" stroke="#c4c4c4" strokeWidth="1.500" />
        <path d="M2 17V21H12V17" fill="none" stroke="#b8bcc4" strokeWidth="2" />
      </svg>
    </div>
  );
}

function Viewport() {
  return (
    <main className="flex min-w-0 flex-1 flex-col border-l border-[#8a9296]">
      <div className="flex h-7 shrink-0">
        <div className="flex items-center bg-[#549fb8] pr-[6px] pl-[6px] text-[19px] text-white">
          <Icon name="millTab" />
          <span className="ml-1 leading-7">10001.prt</span>
          <button type="button" aria-label="关闭 10001.prt" className="ml-[6px]">
            <svg viewBox="0 0 9 9" className="h-[9px] w-[9px]"><path d="M1 1 8 8M8 1 1 8" stroke="#fff" strokeWidth="2.500" /></svg>
          </button>
        </div>
      </div>
      <div className="relative min-h-0 flex-1 overflow-hidden border-t-2 border-[#549fb8] bg-linear-to-b from-[#b4b5b7] to-[#e6e8ea] to-75%">
        <div className="absolute inset-0"><Part /></div>
        <LanguageBar />
        <p className="absolute right-[5px] bottom-px flex items-center leading-6 text-[#666] [text-shadow:1px_1px_0_white]">
          <span className="font-['Liberation_Mono',monospace] text-[13px]">UG</span>
          <span className="text-[16px]">爱好者论坛</span>
          <span className="ml-2 font-['Liberation_Mono',monospace] text-[13px]">WWW.UGSNX.COM</span>
        </p>
      </div>
    </main>
  );
}

export default function App() {
  return (
    <div className="flex h-screen flex-col overflow-hidden bg-white font-['Noto_Sans','Noto_Sans_CJK_SC',sans-serif] text-[17px] text-[#1a1a1a]">
      <Gradients />
      <TitleBar />
      <TabBar />
      <Ribbon />
      <SelectionBar />
      <div className="flex h-[27px] shrink-0 items-center pb-[2px] pl-[114px]">
        <p className="flex-1 text-center font-bold">部件文件已保存</p>
        <div className="flex w-[88px] justify-center"><Tool icon="full" label="全屏显示" /></div>
      </div>
      <div className="flex min-h-0 flex-1">
        <Rail />
        <Navigator />
        <Viewport />
      </div>
    </div>
  );
}
